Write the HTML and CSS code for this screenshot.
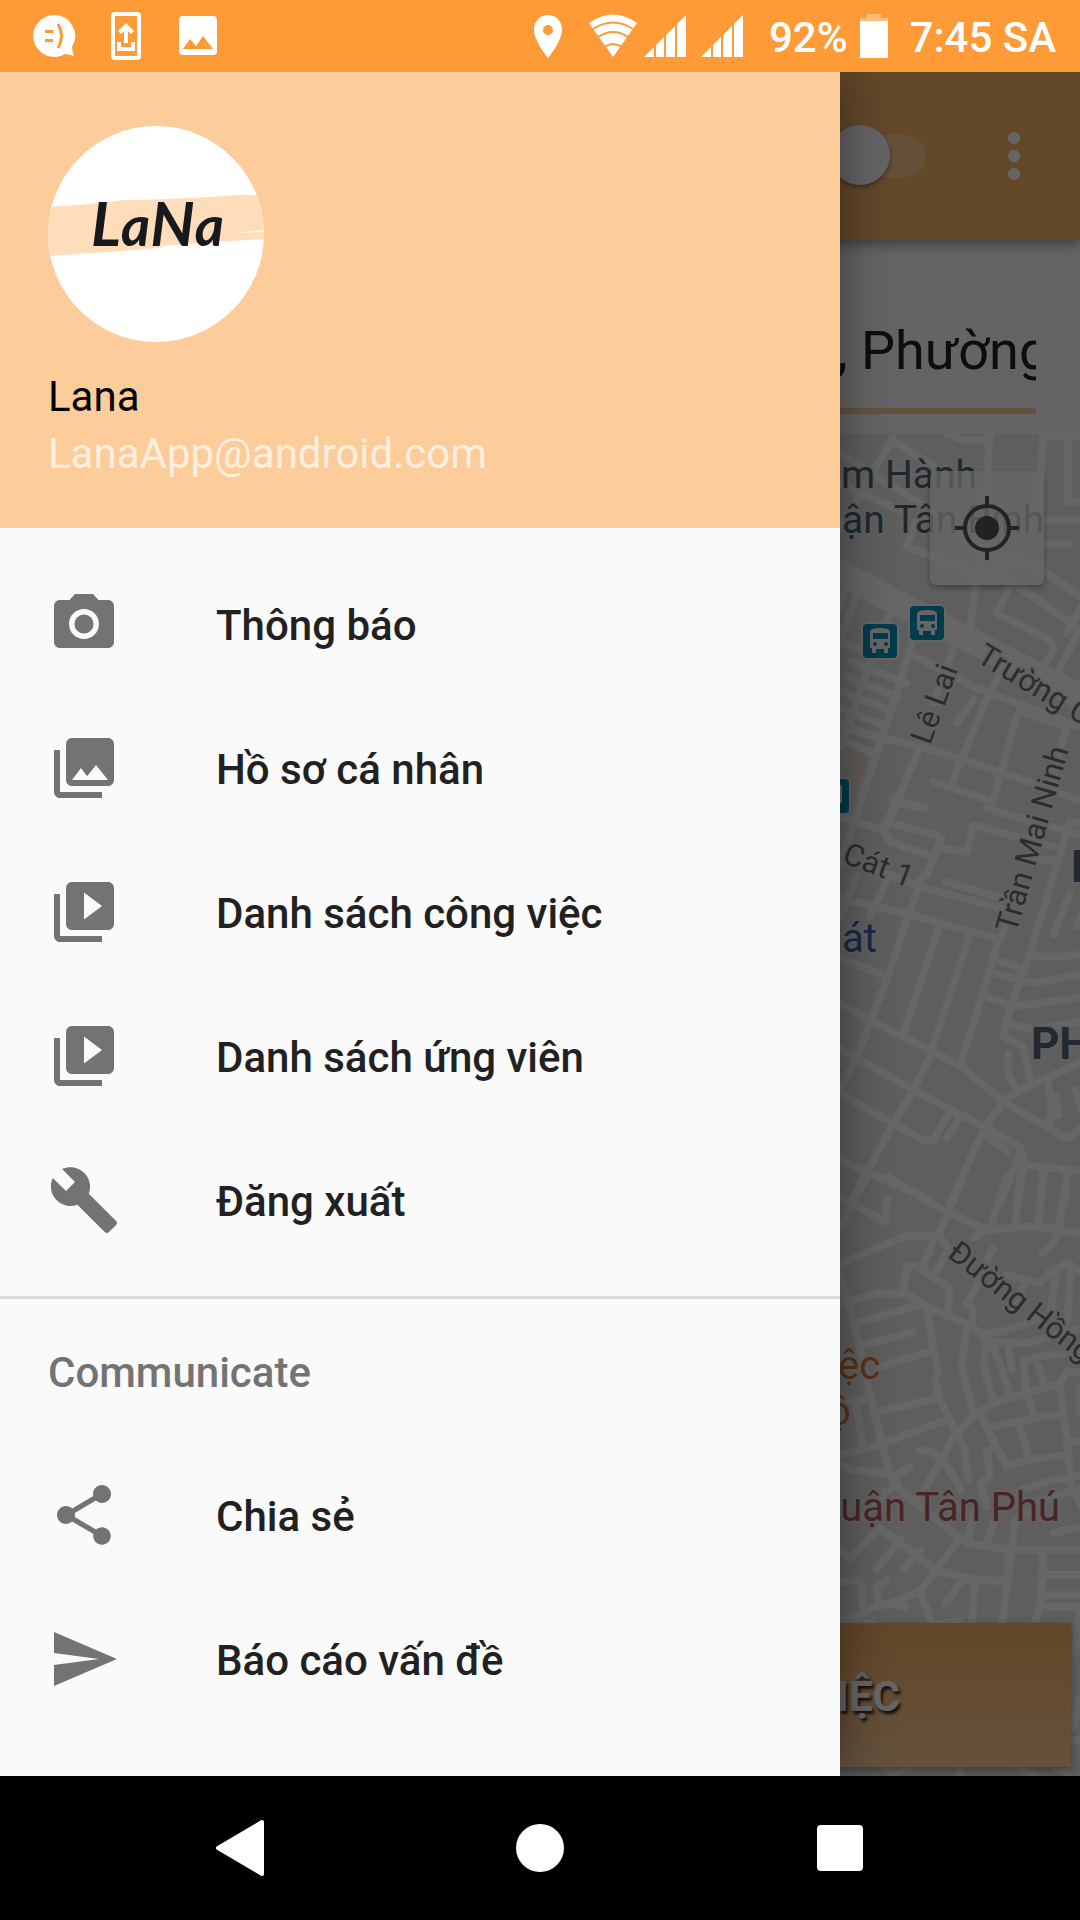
FILE: index.html
```html
<!DOCTYPE html>
<html lang="vi">
<head>
<meta charset="utf-8">
<meta name="viewport" content="width=device-width, initial-scale=1">
<title>Lana</title>
<link rel="stylesheet" href="styles.css">
</head>
<body>
<header class="status">
  <div class="status-left">
    <svg class="icon-48" viewBox="0 0 48 48" aria-hidden="true"><path fill="#fff" d="M24 3a21 21 0 1 0 11 39q3 0 9 2q-2-5-2-9A21 21 0 0 0 24 3z"/><path fill="none" stroke="#ff9b36" stroke-width="3" d="M15 19.500h8M15 28.500h8M28 12q7 12 0 24"/></svg>
    <svg class="icon-48" viewBox="0 0 48 48" aria-hidden="true"><rect x="11" y="2" width="26" height="44" rx="2" fill="none" stroke="#fff" stroke-width="4"/><path fill="#fff" d="M24 11l8 8-3 3-3-3v12h-4V19l-3 3-3-3zM15 30h4v5h10v-5h4v9H15z"/></svg>
    <svg class="icon-48" viewBox="0 0 48 48" aria-hidden="true"><rect x="5" y="4" width="38" height="39" rx="4" fill="#fff"/><path fill="#ff9b36" d="M9 37l7-10 6 7 7-10 10 13z"/></svg>
  </div>
  <div class="status-right">
    <svg class="pin" viewBox="0 0 30 44" aria-hidden="true"><path fill="#fff" fill-rule="evenodd" d="M15 1C7 1 1 7 1 16c0 11 14 28 14 28s14-17 14-28C29 7 23 1 15 1zm0 10a5 5 0 1 1 0 10 5 5 0 0 1 0-10z"/></svg>
    <svg class="wifi" viewBox="0 0 52 44" aria-hidden="true"><path fill="#fff" d="M26 43L2 9Q26-8 50 9z"/><path fill="none" stroke="#ff9b36" stroke-width="2" d="M6 15q20-13 40 0M11 23q15-10 30 0M17 33q9-6 18 0"/></svg>
    <svg class="signal" viewBox="0 0 42 42" aria-hidden="true"><path fill="#fff" d="M0 42L42 0v42z"/><path stroke="#ff9b36" stroke-width="2" d="M11 0v42M21 0v42M32 0v42"/></svg>
    <svg class="signal signal-second" viewBox="0 0 42 42" aria-hidden="true"><path fill="#fff" d="M0 42L42 0v42z"/><path stroke="#ff9b36" stroke-width="2" d="M11 0v42M21 0v42M32 0v42"/></svg>
    <span class="battery-text">92%</span>
    <svg class="battery" viewBox="0 0 28 44" aria-hidden="true"><path fill="#ffbd7b" d="M7 0h14v4h7v4H0V4h7z"/><path fill="#fff" d="M0 7h28v37H0z"/></svg>
    <time class="clock">7:45 SA</time>
  </div>
</header>

<main class="stage">
  <section class="screen">
    <div class="toolbar">
      <input class="switch" type="checkbox" role="switch" aria-label="Trạng thái">
      <button class="more" type="button" aria-label="Menu"><svg viewBox="0 0 48 48" aria-hidden="true"><g fill="#fff"><circle cx="24" cy="6" r="6"/><circle cx="24" cy="24" r="6"/><circle cx="24" cy="42" r="6"/></g></svg></button>
    </div>
    <div class="address">
      <div class="field"><input class="address-input" type="text" value=", Phường" aria-label="Địa chỉ"></div>
    </div>
    <div class="map">
      <svg class="streets" viewBox="840 434 240 1342" aria-hidden="true">
        <g fill="none" stroke="#fff" stroke-width="23" stroke-linecap="round" stroke-linejoin="round">
          <g transform="translate(820 420) scale(.33333)">
            <path fill="#efe5d3" stroke="none" d="M115 880l65 20-8 30-65-15zM98 935l60 20-8 25-60-25zM85 990l60 20-50 150-40-20z"/>
            <path stroke-width="76" d="M20 435L215 540L430 650L820 850"/>
            <path d="M220 55L150 170L60 330M60 100L330 270L500 400L640 430L780 530M215 60L420 190M60 190L260 280M290 300L260 380L520 480L560 410M510 30L490 330L450 630M380 40L430 60H500M670 30L655 300H800M745 55V245H800M670 50H800M680 372H750M570 500L530 580L690 660L700 690L650 780M560 480L640 530L780 630L700 780M120 500L60 660M220 560L160 700L60 980M60 670L160 700M275 670L220 850L60 1330M95 725L260 790M85 772L230 830M50 810L210 870M50 860L190 915M50 910L190 960M270 700L460 800L800 930M400 690L340 850M460 840L410 910M540 760L490 860L390 1100M590 890L520 1140M600 875L740 920L690 1090M90 930L300 980L430 1020L640 1090L800 1150M40 950L160 1000M300 980L200 1220M340 1085L520 1145M240 1150L315 1165M500 1165L800 1250M740 640L800 530M80 490L60 560"/>
          </g>
          <g transform="translate(820 800) scale(.33333)">
            <path d="M60 50L190 90L235 -10M215 70L350 105L365 115L320 225L300 240M190 90L210 125L340 170M220 0L315 22M365 145L440 155L460 75L700 140M650 180H700M750 65L630 460L560 660L550 710L610 740L630 840M750 65L800 75M50 165L300 260L560 330M375 245L550 295M40 290L170 320L270 345L530 415M300 255L265 345L200 540L110 770L50 890M110 230L60 350M200 240L150 350M355 385L250 700M450 405L335 750M560 370L530 440L420 800M50 470L200 530M530 480L605 505M520 520L640 548L800 520M500 590L580 620L800 590M635 470H740L800 460M560 670L640 690L800 660M750 280L700 405M800 310L770 380M40 600L160 665L340 755L430 805L550 905L740 1015L800 975M40 735L280 870L500 985L600 1040L615 1095L800 1115M800 780L600 870L550 905L490 990L390 1210M335 760L280 870L220 970L90 1210M40 870L220 970L310 1020H340L390 935M420 950L380 1015M500 1010L565 1055M565 760V820L590 870M685 840L695 945L680 980M705 890L715 945H695M765 870L785 930M40 1070L330 1200M600 1060L540 1210M610 1100L595 1210M670 1110L660 1210M740 1110L735 1210"/>
          </g>
          <g transform="translate(820 1180) scale(.33333)">
            <path d="M140 -10L60 140M50 45L195 125L200 60M200 -10L370 90L490 145M430 -10L355 165M40 260L250 170L355 165L390 210M460 175L500 150L620 140L700 145L800 165M560 -10L510 145M600 -10L585 140M670 -10L655 140M740 -10L715 150L700 190L665 220M340 180L305 270L390 325L385 400M380 220L350 275M520 205L490 260L470 320L440 370L460 390L455 430M285 255L260 260L250 340M60 370L175 340H260L320 380L450 435L510 485L620 490L800 440M650 420L550 455L490 460M50 260L100 420L150 640L200 850L225 915L300 980L440 1090L580 1110H800M105 430L300 375M130 495L280 455M180 560L330 515M320 390L340 500L355 580M180 695L350 655M345 600L360 660L410 760L435 810L445 900M200 785L380 720M60 825L190 790M60 670L140 655M105 670L130 800M440 440L425 560L460 700M500 480L490 560L520 660M520 500L570 640M565 500L575 570M800 515L650 530L610 545L620 640L640 700M655 555L670 610M800 580L740 575L720 610L600 645L520 670L460 710L400 770L370 830L300 950M720 610L740 780L755 920L800 1010M480 700L530 800L560 860L620 840L740 825M520 740L590 725L730 700M600 740L625 830M530 800L500 815L510 890L480 910L500 980M370 840L425 930M300 812H330L370 840M50 850L100 870L200 880L225 890L270 860M600 930L700 900L800 885M640 970L800 920M740 785H800M700 1060L800 1035M575 1110L585 1020L650 990M445 1090L460 1000M500 1090L520 1030M565 1110V1200M670 1110L665 1240M670 1185H800M230 910L180 950M60 1110L90 1135L180 1045L350 1170L440 1195M240 1080L170 1165M300 1110L255 1165M415 1080L350 1170M180 970L120 1010M560 285L660 310L690 275L745 250L800 290M710 280L690 400M755 260L740 430M610 320L580 380M780 620V700"/>
          </g>
          <g transform="translate(820 1560) scale(.33333)">
            <path d="M290 -10L350 30L440 55L560 65M350 30L300 95L340 200M300 95L210 130L130 150M50 70L110 60L125 80L130 160L60 185L160 190M200 60L170 80L175 130M210 130L255 140M430 60L375 130M572 -10L545 200M465 70L455 200M670 -10L660 140L640 200M670 45H800M670 105H800M660 140H800M780 160L765 280M360 190L420 185M760 540H800M775 420L760 500M180 610L220 640L270 620M420 610V640M590 620L650 650M700 620L740 640"/>
          </g>
        </g>
        <g>
          <g id="bus-stop">
            <rect x="908" y="604" width="38" height="38" rx="7" fill="#fff"/>
            <rect x="910" y="606" width="34" height="34" rx="4" fill="#0791c4"/>
            <path fill="#fff" fill-rule="evenodd" d="M917 614q0-4 10-4t10 4v16h-2v5h-4v-4h-8v4h-4v-5h-2zm3 1v6h15v-6zm2 9a2 2 0 1 0 .1 0zm11 0a2 2 0 1 0 .1 0z"/>
          </g>
          <use href="#bus-stop" x="-47" y="18"/>
          <use href="#bus-stop" x="-95" y="173"/>
        </g>
        <g class="labels">
          <g class="place"><text x="841" y="488">m Hành</text><text x="842" y="533">ận Tân Bình</text></g>
          <g class="street">
            <text transform="translate(975 661) rotate(31)">Trường C</text>
            <text transform="translate(930 746) rotate(-70)">Lê Lai</text>
            <text transform="translate(1016 934) rotate(-74)">Trần Mai Ninh</text>
            <text transform="translate(841 862) rotate(21)">Cát 1</text>
            <text transform="translate(946 1256) rotate(38)">Đường Hồng</text>
          </g>
          <text class="park" x="842" y="952">át</text>
          <g class="ward"><text x="1071" y="882">P</text><text x="1031" y="1059">PH</text></g>
          <g class="shop"><text x="838" y="1379">ệc</text><text x="828" y="1425">ộ</text></g>
          <text class="office" x="1060" y="1521" text-anchor="end">quận Tân Phú</text>
        </g>
      </svg>
      <button class="locate" type="button" aria-label="Vị trí của tôi"><svg viewBox="0 0 64 64" aria-hidden="true"><g fill="none" stroke="#555" stroke-width="4"><circle cx="32" cy="32" r="22"/><path d="M32 0v9M32 55v9M0 32h9M55 32h9"/></g><circle cx="32" cy="32" r="12" fill="#555"/></svg></button>
      <button class="cta" type="button">VIỆC</button>
    </div>
  </section>

  <div class="scrim"></div>

  <aside class="drawer">
    <div class="profile">
      <svg class="avatar" viewBox="0 0 216 216" role="img" aria-label="LaNa">
        <defs><clipPath id="round"><circle cx="108" cy="108" r="108"/></clipPath></defs>
        <g clip-path="url(#round)">
          <path fill="#fff" d="M0 0h216v216H0z"/>
          <path fill="#ffdcba" d="M0 81Q40 79 76 74Q120 74 190 69L216 69V104L188 107L216 106V113L150 117L112 120L118 121L88 124L60 126L0 130z"/>
        </g>
        <text class="logo-text" x="43" y="120"><tspan class="logo-cap">L</tspan>a<tspan class="logo-cap">N</tspan>a</text>
      </svg>
      <div class="name">Lana</div>
      <div class="email">LanaApp@android.com</div>
    </div>
    <nav class="menu">
      <a class="item" href="#thong-bao"><svg viewBox="0 0 24 24" aria-hidden="true"><circle cx="12" cy="12" r="3.200"/><path d="M9 2L7.170 4H4c-1.100 0-2 .9-2 2v12c0 1.100.9 2 2 2h16c1.100 0 2-.9 2-2V6c0-1.100-.9-2-2-2h-3.170L15 2H9zm3 15c-2.760 0-5-2.240-5-5s2.240-5 5-5 5 2.240 5 5-2.240 5-5 5z"/></svg>Thông báo</a>
      <a class="item" href="#ho-so"><svg viewBox="0 0 24 24" aria-hidden="true"><path d="M22 16V4c0-1.100-.9-2-2-2H8c-1.100 0-2 .9-2 2v12c0 1.100.9 2 2 2h12c1.100 0 2-.9 2-2zm-11-4l2.030 2.710L16 11l4 5H8l3-4zM2 6v14c0 1.100.9 2 2 2h14v-2H4V6H2z"/></svg>Hồ sơ cá nhân</a>
      <a class="item" href="#cong-viec"><svg viewBox="0 0 24 24" aria-hidden="true"><path d="M4 6H2v14c0 1.100.9 2 2 2h14v-2H4V6zm16-4H8c-1.100 0-2 .9-2 2v12c0 1.100.9 2 2 2h12c1.100 0 2-.9 2-2V4c0-1.100-.9-2-2-2zm-8 12.500v-9l6 4.500-6 4.500z"/></svg>Danh sách công việc</a>
      <a class="item" href="#ung-vien"><svg viewBox="0 0 24 24" aria-hidden="true"><path d="M4 6H2v14c0 1.100.9 2 2 2h14v-2H4V6zm16-4H8c-1.100 0-2 .9-2 2v12c0 1.100.9 2 2 2h12c1.100 0 2-.9 2-2V4c0-1.100-.9-2-2-2zm-8 12.500v-9l6 4.500-6 4.500z"/></svg>Danh sách ứng viên</a>
      <a class="item" href="#dang-xuat"><svg viewBox="0 0 24 24" aria-hidden="true"><path d="M22.700 19l-9.100-9.100c.9-2.300.4-5-1.500-6.900-2-2-5-2.400-7.400-1.300L9 6 6 9 1.600 4.700C.4 7.100.9 10.100 2.900 12.100c1.900 1.900 4.600 2.400 6.900 1.500l9.100 9.100c.4.4 1 .4 1.400 0l2.300-2.300c.5-.4.5-1.100.1-1.400z"/></svg>Đăng xuất</a>
    </nav>
    <section class="group">
      <h2 class="group-title">Communicate</h2>
      <a class="item" href="#chia-se"><svg viewBox="0 0 24 24" aria-hidden="true"><path d="M18 16.080c-.76 0-1.440.3-1.960.77L8.910 12.700c.05-.23.09-.46.09-.7s-.04-.47-.09-.7l7.050-4.110c.54.5 1.250.81 2.040.81 1.660 0 3-1.340 3-3s-1.340-3-3-3-3 1.340-3 3c0 .24.04.47.09.7L8.040 9.810C7.500 9.310 6.790 9 6 9c-1.660 0-3 1.340-3 3s1.340 3 3 3c.79 0 1.500-.31 2.040-.81l7.120 4.160c-.05.21-.08.43-.08.650 0 1.610 1.310 2.920 2.920 2.920s2.920-1.310 2.920-2.920-1.310-2.920-2.920-2.920z"/></svg>Chia sẻ</a>
      <a class="item" href="#bao-cao"><svg viewBox="0 0 24 24" aria-hidden="true"><path d="M2 21l21-9L2 3v7l15 2-15 2z"/></svg>Báo cáo vấn đề</a>
    </section>
  </aside>
</main>

<footer class="navbar">
  <button type="button" aria-label="Quay lại"><svg viewBox="0 0 60 60" aria-hidden="true"><path fill="#fff" stroke="#fff" stroke-width="4" stroke-linejoin="round" d="M8 30L52 4v52z"/></svg></button>
  <button type="button" aria-label="Màn hình chính"><svg viewBox="0 0 60 60" aria-hidden="true"><circle cx="30" cy="30" r="24" fill="#fff"/></svg></button>
  <button type="button" aria-label="Gần đây"><svg viewBox="0 0 60 60" aria-hidden="true"><rect x="7" y="7" width="46" height="46" rx="4" fill="#fff"/></svg></button>
</footer>
</body>
</html>
```
FILE: styles.css
```css
* { box-sizing: border-box; }

body {
  margin: 0;
  min-height: 100vh;
  display: flex;
  flex-direction: column;
  background: #000;
  font-family: Roboto, "Noto Sans", sans-serif;
  font-size: 42px;
}

button {
  border: 0;
  padding: 0;
  background: none;
  font-family: inherit;
}

svg { display: block; }

/* Status bar */
.status {
  position: relative;
  z-index: 3;
  height: 72px;
  flex: none;
  display: flex;
  justify-content: space-between;
  align-items: center;
  padding: 0 24px 0 30px;
  background: #ff9b36;
  color: #fff;
  font-weight: 500;
  line-height: 52px;
}

.status-left { display: flex; gap: 24px; }
.icon-48 { width: 48px; height: 48px; }
.status-right { display: flex; align-items: center; }
.pin { width: 30px; height: 44px; }
.wifi { width: 52px; height: 44px; margin-left: 24px; }
.signal { width: 42px; height: 42px; margin-left: 5px; }
.signal-second { margin-left: 15px; }
.battery-text { margin-left: 26px; padding-top: 4px; }
.battery { width: 28px; height: 44px; margin-left: 12px; }
.clock { margin-left: 22px; padding-top: 4px; }

/* The screen, the scrim and the drawer share one grid cell */
.stage {
  flex: 1;
  display: grid;
  grid-template-columns: minmax(0, 1fr);
  overflow: hidden;
}

.screen, .scrim, .drawer { grid-area: 1 / 1; }

.screen {
  display: flex;
  flex-direction: column;
  background: #fafafa;
}

.scrim {
  z-index: 1;
  background: rgba(0, 0, 0, .6);
}

.toolbar {
  position: relative;
  height: 168px;
  display: flex;
  align-items: center;
  justify-content: flex-end;
  gap: 64px;
  padding: 0 42px;
  background: #f8b469;
  box-shadow: 0 4px 12px rgba(0, 0, 0, .4);
}

.switch {
  appearance: none;
  position: relative;
  width: 96px;
  height: 42px;
  margin: 0;
  border-radius: 21px;
  background: #fcc78f;
}

.switch::before {
  content: "";
  position: absolute;
  left: 0;
  top: -10px;
  width: 60px;
  height: 60px;
  border-radius: 50%;
  background: #fafafa;
  box-shadow: 0 2px 4px rgba(0, 0, 0, .4);
}

.more, .more svg { width: 48px; height: 48px; }

.address {
  height: 194px;
  padding: 60px 44px 20px;
}

.field {
  height: 114px;
  display: flex;
  justify-content: flex-end;
  border-bottom: 6px solid #fccb9b;
}

.address-input {
  width: 199px;
  height: 100px;
  border: 0;
  padding: 0;
  background: none;
  color: #212121;
  font-family: inherit;
  font-size: 54px;
}

.map {
  position: relative;
  flex: 1;
  overflow: hidden;
  background: #ebebeb;
}

.streets {
  position: absolute;
  top: 0;
  right: 0;
  width: 240px;
  height: 1342px;
}

.labels { font-size: 40px; }

.labels text {
  paint-order: stroke;
  stroke: #f2f2f2;
  stroke-width: 4px;
  stroke-linejoin: round;
}

.labels .street { font-size: 31px; fill: #6a7070; }
.labels .place { font-size: 39px; fill: #4c6570; }
.park { fill: #3c68b0; }
.ward { fill: #5a6878; font-size: 44px; font-weight: 700; }
.shop { fill: #e07a42; }
.office { fill: #b85a5e; }

.locate {
  position: absolute;
  top: 37px;
  right: 36px;
  width: 114px;
  height: 114px;
  display: grid;
  place-items: center;
  border-radius: 6px;
  background: rgba(255, 255, 255, .75);
  box-shadow: 0 3px 6px rgba(0, 0, 0, .3);
}

.locate svg { width: 64px; height: 64px; }

.cta {
  position: absolute;
  left: 9px;
  right: 9px;
  bottom: 9px;
  height: 144px;
  padding: 2px 171px 0 0;
  background: linear-gradient(#f8b063, #fccb9b);
  box-shadow: 0 4px 10px rgba(0, 0, 0, .4);
  color: #fff;
  font-size: 42px;
  font-weight: 700;
  text-align: right;
  text-shadow: 2px 3px 3px rgba(0, 0, 0, .8);
}

/* Navigation drawer */
.drawer {
  z-index: 2;
  width: calc(100% - 240px);
  background: #fafafa;
  box-shadow: 0 0 48px rgba(0, 0, 0, .45);
}

.profile {
  padding: 54px 48px 46px;
  background: #fdcc9b;
  line-height: 57px;
}

.avatar { width: 216px; height: 216px; margin-bottom: 26px; }

.logo-text {
  font-family: Lato, sans-serif;
  font-size: 56px;
  font-style: italic;
  font-weight: 700;
  fill: #161a1d;
}

.logo-cap { font-size: 62px; }

.name { color: #000; }
.email { color: #ffefdf; }

.menu { padding: 24px 0; }

.item {
  height: 144px;
  display: flex;
  align-items: center;
  gap: 96px;
  padding: 4px 48px 0;
  color: #212121;
  font-weight: 500;
  line-height: 52px;
  text-decoration: none;
}

.item svg {
  width: 72px;
  height: 72px;
  margin-bottom: 4px;
  fill: #737373;
}

.group { border-top: 3px solid #dadada; }

.group-title {
  height: 144px;
  margin: 0;
  padding: 0 48px;
  color: #737373;
  font-size: 42px;
  font-weight: 500;
  line-height: 148px;
}

/* System navigation */
.navbar {
  position: relative;
  z-index: 3;
  height: 144px;
  flex: none;
  display: grid;
  grid-template-columns: repeat(3, 1fr);
  place-items: center;
  padding: 0 90px;
  background: #000;
}

.navbar svg { width: 60px; height: 60px; }
```
